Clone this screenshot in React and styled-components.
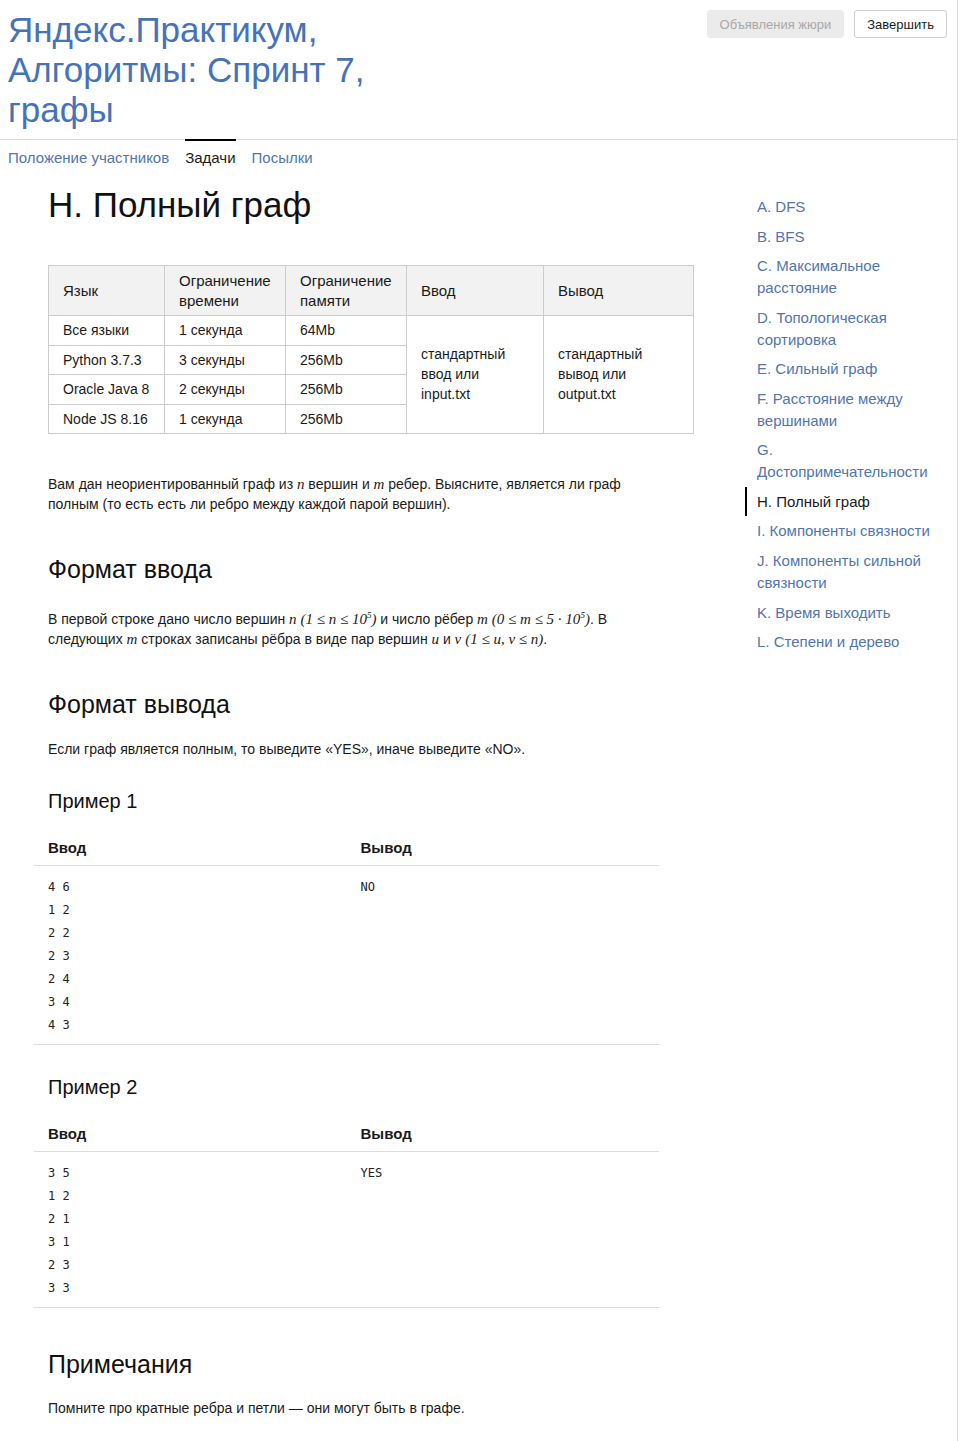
import React from 'react'
import styled, { createGlobalStyle } from 'styled-components'

const GlobalStyle = createGlobalStyle`
  body {
    margin: 0;
    background: #fff;
    font-family: "Liberation Sans", Arial, sans-serif;
    color: #1a1a1a;
  }
`

const Page = styled.div`
  width: 958px;
  min-height: 1441px;
  border-right: 1px solid #dcdcdc;
  box-sizing: border-box;
`

const Header = styled.header`
  display: flex;
  justify-content: space-between;
  align-items: flex-start;
  padding: 10px 10px 0 8px;
  border-bottom: 1px solid #d9d9d9;
`

const Title = styled.h1`
  margin: 0 0 9px;
  max-width: 400px;
  font-size: 35px;
  line-height: 40px;
  font-weight: normal;
  color: #4672b8;
`

const Actions = styled.div`
  display: flex;
  gap: 10px;
`

const Button = styled.button`
  height: 28px;
  padding: 0 12px;
  font-family: "Liberation Sans", Arial, sans-serif;
  font-size: 13px;
  border-radius: 3px;
  border: 1px solid ${p => (p.disabled ? '#ebebeb' : '#cfcfcf')};
  background: ${p => (p.disabled ? '#ebebeb' : '#fff')};
  color: ${p => (p.disabled ? '#a8a8a8' : '#1a1a1a')};
`

const Tabs = styled.nav`
  display: flex;
  gap: 16px;
  padding-left: 8px;
  margin-top: -1px;
`

const Tab = styled.a`
  padding: 7px 0 7px;
  border-top: 2px solid ${p => (p.active ? '#000' : 'transparent')};
  font-size: 15px;
  line-height: 20px;
  color: ${p => (p.active ? '#1a1a1a' : '#5175ad')};
  text-decoration: none;
`

const Body = styled.div`
  display: flex;
  align-items: flex-start;
`

const Content = styled.main`
  width: 645px;
  margin-left: 48px;
`

const Sidebar = styled.aside`
  width: 192px;
  margin-left: 52px;
  margin-top: 17px;
`

const SideItem = styled.a`
  display: block;
  padding: 4px 0 4px 10px;
  border-left: 2px solid ${p => (p.active ? '#000' : 'transparent')};
  font-size: 15px;
  line-height: 21.7px;
  color: ${p => (p.active ? '#1a1a1a' : '#5175ad')};
  text-decoration: none;
`

const ProblemTitle = styled.h1`
  margin: 10px 0 40px;
  font-size: 35px;
  line-height: 40px;
  font-weight: normal;
  color: #111;
`

const Limits = styled.table`
  width: 645px;
  table-layout: fixed;
  border-collapse: collapse;
  font-size: 14px;
  line-height: 20px;

  th, td {
    border: 1px solid #cccccc;
    padding: 4px 14px 4.5px;
    text-align: left;
    vertical-align: middle;
    font-weight: normal;
  }
  th {
    background: #f2f2f2;
    padding: 5px 14px 4px;
    font-size: 15px;
  }
`

const Text = styled.p`
  max-width: 590px;
  margin: ${p => p.$top || 20}px 0 0;
  font-size: 14px;
  line-height: 20px;

  sup {
    font-size: 9px;
    line-height: 0;
  }
`

const Heading = styled.h2`
  margin: ${p => p.$top || 42}px 0 0;
  font-size: 25px;
  line-height: 28px;
  font-weight: normal;
  color: #111;
`

const SubHeading = styled.h3`
  margin: 30px 0 0;
  font-size: 20px;
  line-height: 24px;
  font-weight: normal;
  color: #111;
`

const Math = styled.span`
  font-family: "Liberation Serif", "Times New Roman", serif;
  font-style: italic;
  font-size: 15px;
  line-height: 1;
`

const Example = styled.div`
  width: 625px;
  margin: 25px 0 0 -14px;
  display: grid;
  grid-template-columns: 1fr 1fr;
  border-bottom: 1px solid #dddddd;
`

const ExHead = styled.div`
  padding: 0 14px 7px;
  border-bottom: 1px solid #dddddd;
  font-size: 15px;
  line-height: 20px;
  font-weight: bold;
`

const Pre = styled.pre`
  margin: 0;
  padding: 10px 14px 7px;
  font-family: "DejaVu Sans Mono", "Liberation Mono", monospace;
  font-size: 12px;
  line-height: 23px;
  color: #222;
`

const tasks = [
  'A. DFS',
  'B. BFS',
  'C. Максимальное расстояние',
  'D. Топологическая сортировка',
  'E. Сильный граф',
  'F. Расстояние между вершинами',
  'G. Достопримечательности',
  'H. Полный граф',
  'I. Компоненты связности',
  'J. Компоненты сильной связности',
  'K. Время выходить',
  'L. Степени и дерево',
]

const limits = [
  ['Все языки', '1 секунда', '64Mb'],
  ['Python 3.7.3', '3 секунды', '256Mb'],
  ['Oracle Java 8', '2 секунды', '256Mb'],
  ['Node JS 8.16', '1 секунда', '256Mb'],
]

const examples = [
  { input: '4 6\n1 2\n2 2\n2 3\n2 4\n3 4\n4 3', output: 'NO' },
  { input: '3 5\n1 2\n2 1\n3 1\n2 3\n3 3', output: 'YES' },
]

export default function App() {
  return (
    <Page>
      <GlobalStyle />
      <Header>
        <Title>Яндекс.Практикум, Алгоритмы: Спринт 7, графы</Title>
        <Actions>
          <Button disabled>Объявления жюри</Button>
          <Button>Завершить</Button>
        </Actions>
      </Header>
      <Tabs>
        <Tab href="#">Положение участников</Tab>
        <Tab href="#" active>Задачи</Tab>
        <Tab href="#">Посылки</Tab>
      </Tabs>
      <Body>
        <Content>
          <ProblemTitle>H. Полный граф</ProblemTitle>
          <Limits>
            <colgroup>
              <col style={{ width: 116 }} />
              <col style={{ width: 121 }} />
              <col style={{ width: 121 }} />
              <col style={{ width: 137 }} />
              <col style={{ width: 150 }} />
            </colgroup>
            <thead>
              <tr>
                <th>Язык</th>
                <th>Ограничение времени</th>
                <th>Ограничение памяти</th>
                <th>Ввод</th>
                <th>Вывод</th>
              </tr>
            </thead>
            <tbody>
              {limits.map((row, i) => (
                <tr key={row[0]}>
                  <td>{row[0]}</td>
                  <td>{row[1]}</td>
                  <td>{row[2]}</td>
                  {i === 0 && (
                    <>
                      <td rowSpan={4}>стандартный ввод или input.txt</td>
                      <td rowSpan={4}>стандартный вывод или output.txt</td>
                    </>
                  )}
                </tr>
              ))}
            </tbody>
          </Limits>

          <Text $top={40}>
            Вам дан неориентированный граф из <Math>n</Math> вершин и <Math>m</Math> ребер. Выясните, является ли граф
            полным (то есть есть ли ребро между каждой парой вершин).
          </Text>

          <Heading $top={41}>Формат ввода</Heading>
          <Text $top={26}>
            В первой строке дано число вершин <Math>n</Math> <Math>(1 ≤ n ≤ 10<sup>5</sup>)</Math> и число рёбер{' '}
            <Math>m</Math> <Math>(0 ≤ m ≤ 5 · 10<sup>5</sup>)</Math>. В следующих <Math>m</Math> строках записаны рёбра в
            виде пар вершин <Math>u</Math> и <Math>v</Math> <Math>(1 ≤ u, v ≤ n)</Math>.
          </Text>

          <Heading $top={41}>Формат вывода</Heading>
          <Text $top={21}>Если граф является полным, то выведите «YES», иначе выведите «NO».</Text>

          {examples.map((ex, i) => (
            <React.Fragment key={i}>
              <SubHeading>Пример {i + 1}</SubHeading>
              <Example>
                <ExHead>Ввод</ExHead>
                <ExHead>Вывод</ExHead>
                <Pre>{ex.input}</Pre>
                <Pre>{ex.output}</Pre>
              </Example>
            </React.Fragment>
          ))}

          <Heading>Примечания</Heading>
          <Text $top={20}>Помните про кратные ребра и петли — они могут быть в графе.</Text>
        </Content>
        <Sidebar>
          {tasks.map(t => (
            <SideItem href="#" key={t} active={t.startsWith('H.')}>
              {t}
            </SideItem>
          ))}
        </Sidebar>
      </Body>
    </Page>
  )
}
